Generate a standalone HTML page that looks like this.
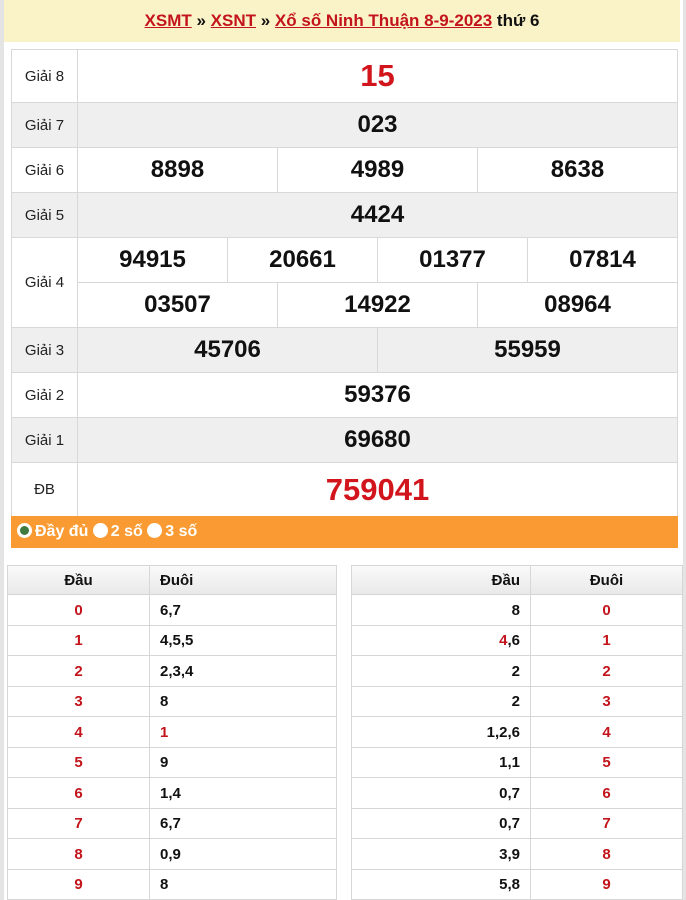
<!DOCTYPE html>
<html><head><meta charset="utf-8"><style>
*{margin:0;padding:0;box-sizing:border-box}
body{width:686px;height:900px;background:#fff;font-family:"Liberation Sans",Arial,sans-serif;position:relative;overflow:hidden}
.a{position:absolute}
.frame{left:0;top:0;width:686px;height:900px;border-left:4px solid #e4e4e4;border-right:3px solid #e4e4e4}
.hdr{left:4px;top:0;width:676px;height:42px;background:#fbf3c8;text-align:center;font-size:17px;font-weight:bold;line-height:42px;color:#111}
.hdr u{color:#c3141c}
.c{position:absolute;border:1px solid #d8d8d8;display:flex;align-items:center;justify-content:center;font-weight:bold;font-size:24px;color:#111}
.l{font-weight:normal;font-size:15px;color:#222}
.g{background:#efefef}
.r{color:#d2151d;font-size:31px}
.or{left:11px;top:516px;width:667px;height:32px;background:#f99b32;color:#fff;font-weight:bold;font-size:16px;line-height:32px;padding-left:6px}
.dot{display:inline-block;width:15px;height:15px;border-radius:50%;background:#fff;vertical-align:-2px;margin-right:3px}
.t{position:absolute;border:1px solid #d6d6d6;font-size:15px;font-weight:bold;display:flex;align-items:center;color:#111}
.th{background:linear-gradient(#fafafa,#e9e9e9);font-size:15px}
.red{color:#c3141c}
</style></head><body>
<div class="a frame"></div>
<div class="a hdr"><u>XSMT</u> » <u>XSNT</u> » <u>Xổ số Ninh Thuận 8-9-2023</u> thứ 6</div>

<div class="c l" style="left:11px;top:49px;width:67px;height:54px">Giải 8</div>
<div class="c r" style="left:77px;top:49px;width:601px;height:54px">15</div>
<div class="c l g" style="left:11px;top:102px;width:67px;height:46px">Giải 7</div>
<div class="c g" style="left:77px;top:102px;width:601px;height:46px">023</div>
<div class="c l" style="left:11px;top:147px;width:67px;height:46px">Giải 6</div>
<div class="c" style="left:77px;top:147px;width:201px;height:46px">8898</div>
<div class="c" style="left:277px;top:147px;width:201px;height:46px">4989</div>
<div class="c" style="left:477px;top:147px;width:201px;height:46px">8638</div>
<div class="c l g" style="left:11px;top:192px;width:67px;height:46px">Giải 5</div>
<div class="c g" style="left:77px;top:192px;width:601px;height:46px">4424</div>
<div class="c l" style="left:11px;top:237px;width:67px;height:91px">Giải 4</div>
<div class="c" style="left:77px;top:237px;width:151px;height:46px">94915</div>
<div class="c" style="left:227px;top:237px;width:151px;height:46px">20661</div>
<div class="c" style="left:377px;top:237px;width:151px;height:46px">01377</div>
<div class="c" style="left:527px;top:237px;width:151px;height:46px">07814</div>
<div class="c" style="left:77px;top:282px;width:201px;height:46px">03507</div>
<div class="c" style="left:277px;top:282px;width:201px;height:46px">14922</div>
<div class="c" style="left:477px;top:282px;width:201px;height:46px">08964</div>
<div class="c l g" style="left:11px;top:327px;width:67px;height:46px">Giải 3</div>
<div class="c g" style="left:77px;top:327px;width:301px;height:46px">45706</div>
<div class="c g" style="left:377px;top:327px;width:301px;height:46px">55959</div>
<div class="c l" style="left:11px;top:372px;width:67px;height:46px">Giải 2</div>
<div class="c" style="left:77px;top:372px;width:601px;height:46px">59376</div>
<div class="c l g" style="left:11px;top:417px;width:67px;height:46px">Giải 1</div>
<div class="c g" style="left:77px;top:417px;width:601px;height:46px">69680</div>
<div class="c l" style="left:11px;top:462px;width:67px;height:55px">ĐB</div>
<div class="c r" style="left:77px;top:462px;width:601px;height:55px">759041</div>
<div class="a or"><span class="dot" style="border:3px solid #fff;background:#3f7a3f"></span>Đầy đủ <span class="dot"></span>2 số <span class="dot"></span>3 số</div>

<div id="tb"></div>
<script>
var L=[["0","6,7"],["1","4,5,5"],["2","2,3,4"],["3","8"],["4","1"],["5","9"],["6","1,4"],["7","6,7"],["8","0,9"],["9","8"]];
var R=["8","4,6","2","2","1,2,6","1,1","0,7","0,7","3,9","5,8"];
var h="";
function cell(x,y,w,hh,txt,cls,al){h+='<div class="t '+cls+'" style="left:'+x+'px;top:'+y+'px;width:'+w+'px;height:'+hh+'px;justify-content:'+al+';padding:0 10px">'+txt+'</div>';}
cell(7,565,143,30,"Đầu","th","center");cell(149,565,188,30,"Đuôi","th","flex-start");
cell(351,565,180,30,"Đầu","th","flex-end");cell(530,565,153,30,"Đuôi","th","center");
for(var i=0;i<10;i++){var y=594+Math.round(i*30.5);var hh=594+Math.round((i+1)*30.5)-y+1;
cell(7,y,143,hh,L[i][0],"red","center");
cell(149,y,188,hh,L[i][1],i==4?"red":"","flex-start");
cell(351,y,180,hh,i==1?'<span class="red">4</span>,6':R[i],"","flex-end");
cell(530,y,153,hh,String(i),"red","center");}
document.getElementById("tb").innerHTML=h;
</script>
</body></html>
